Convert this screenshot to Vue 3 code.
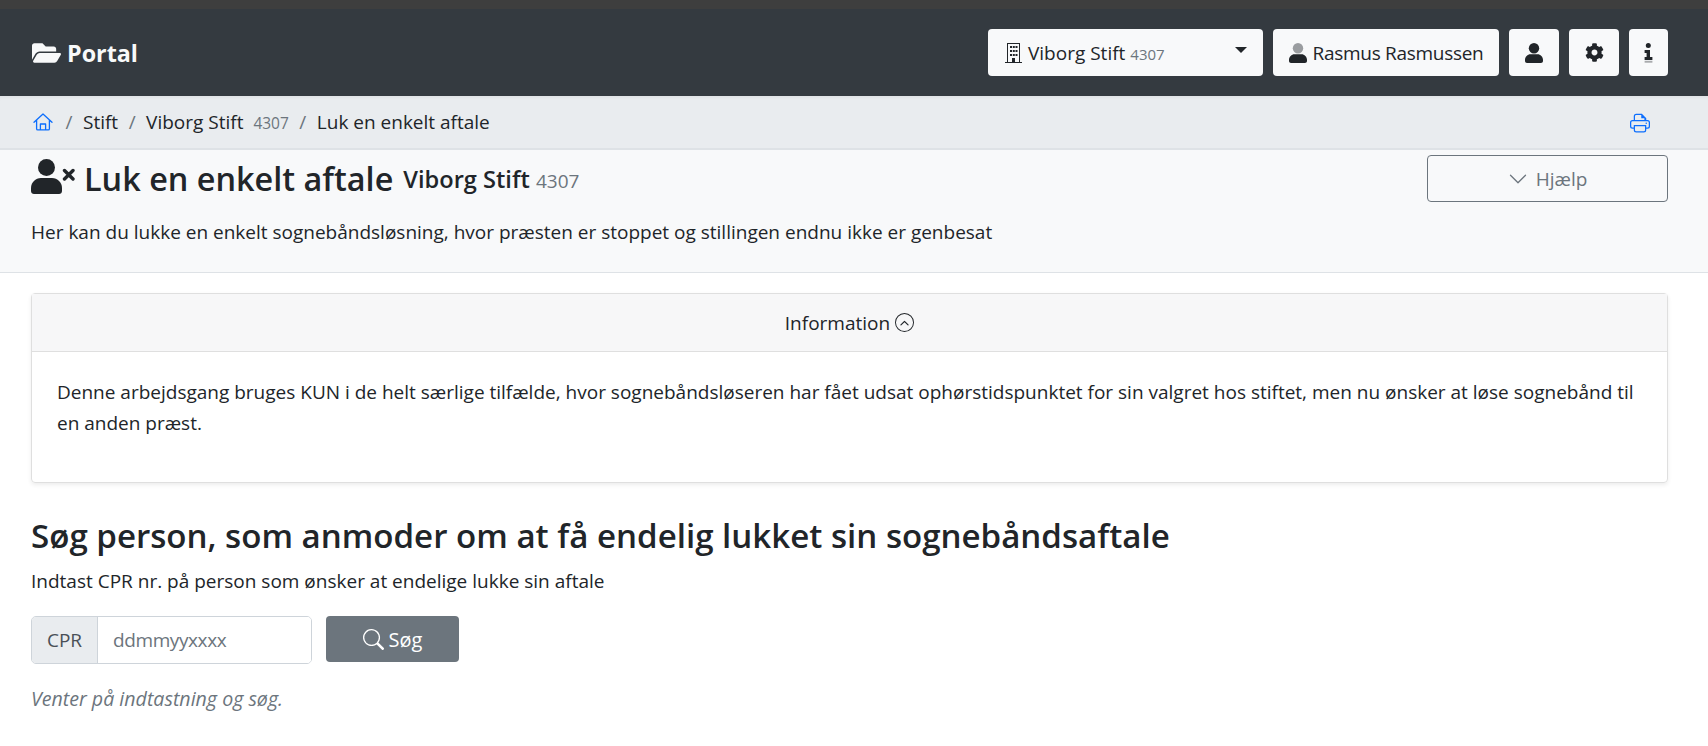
<script setup>
const crumbs = ['Stift']
</script>

<template>
  <div class="page">
    <div class="topstrip"></div>
    <nav class="navbar">
      <a class="brand">
        <svg class="folder" viewBox="0 0 576 512"><path fill="currentColor" d="M572.7 292.1 500.3 416.2A64 64 0 0 1 445 448H45c-18.500 0-30.100-20.100-20.700-36.100l72.400-124.200A64 64 0 0 1 152 256h400c18.500 0 30.100 20.100 20.700 36.100zM152 224h328v-48c0-26.500-21.500-48-48-48H272l-64-64H48C21.500 64 0 85.500 0 112v278l69.100-118.400C86.200 242.300 117.800 224 152 224z"/></svg>
        <span>Portal</span>
      </a>
      <div class="nav-actions">
        <button class="nbtn select">
          <span class="select-label">
            <svg class="ico-building" viewBox="0 0 17 20"><path fill="currentColor" d="M2 0h13v19h2v1H0v-1h2V0zm1 1v18h4v-4h3v4h4V1H3z"/><path fill="currentColor" d="M5 3h2v2H5zm2.800 0h2v2h-2zm2.700 0h2v2h-2zM5 7h2v2H5zm2.800 0h2v2h-2zm2.700 0h2v2h-2zM5 11h2v2H5zm2.800 0h2v2h-2zm2.700 0h2v2h-2z"/></svg>
            <span>Viborg Stift</span><small class="code">4307</small>
          </span>
          <span class="caret"></span>
        </button>
        <button class="nbtn user">
          <svg class="ico-user" viewBox="0 0 18 20"><ellipse cx="9" cy="5.200" rx="5.200" ry="5.200" fill="#9a9da0"/><path fill="currentColor" d="M5.500 11.200h7c3 0 5.500 2.500 5.500 5.500v1.300c0 1.100-.9 2-2 2H2c-1.100 0-2-.9-2-2v-1.300c0-3 2.500-5.500 5.500-5.500z"/></svg>
          <span class="username">Rasmus Rasmussen</span>
        </button>
        <button class="nbtn square">
          <svg class="ico-user2" viewBox="0 0 18 20"><ellipse cx="9" cy="5.200" rx="5.200" ry="5.200" fill="currentColor"/><path fill="currentColor" d="M5.500 11.200h7c3 0 5.500 2.500 5.500 5.500v1.300c0 1.100-.9 2-2 2H2c-1.100 0-2-.9-2-2v-1.300c0-3 2.500-5.500 5.500-5.500z"/></svg>
        </button>
        <button class="nbtn square">
          <svg class="ico-gear" viewBox="0 0 512 512"><path fill="currentColor" d="M487.400 315.700l-42.600-24.600c4.300-23.200 4.300-47 0-70.200l42.600-24.600c4.900-2.800 7.100-8.600 5.500-14-11.100-35.600-30-67.800-54.700-94.600-3.800-4.100-10-5.100-14.800-2.300L380.800 110c-17.900-15.400-38.500-27.300-60.800-35.100V25.800c0-5.600-3.900-10.500-9.400-11.700-36.700-8.200-74.300-7.800-109.200 0-5.500 1.200-9.400 6.100-9.400 11.700V75c-22.200 7.900-42.800 19.800-60.800 35.100L88.700 85.500c-4.900-2.800-11-1.900-14.800 2.300-24.700 26.700-43.600 58.900-54.700 94.600-1.700 5.400.6 11.200 5.500 14L67.300 221c-4.300 23.200-4.300 47 0 70.200l-42.600 24.600c-4.900 2.800-7.100 8.600-5.500 14 11.100 35.600 30 67.800 54.700 94.600 3.800 4.100 10 5.100 14.800 2.300l42.600-24.600c17.900 15.400 38.500 27.300 60.800 35.100v49.200c0 5.600 3.900 10.500 9.400 11.700 36.700 8.200 74.300 7.800 109.200 0 5.500-1.200 9.400-6.100 9.400-11.700v-49.200c22.200-7.900 42.800-19.800 60.800-35.100l42.600 24.600c4.900 2.800 11 1.900 14.800-2.300 24.700-26.700 43.600-58.900 54.700-94.600 1.500-5.500-.7-11.300-5.600-14.100zM256 336c-44.100 0-80-35.900-80-80s35.900-80 80-80 80 35.900 80 80-35.900 80-80 80z"/></svg>
        </button>
        <button class="nbtn info">
          <svg class="ico-info" viewBox="0 0 9 20"><circle cx="4.300" cy="2.600" r="2.500" fill="currentColor"/><path fill="currentColor" d="M.6 7h5.400v7h2.400v3H.6v-3h2V10H.6z"/><rect x=".6" y="17.800" width="7.800" height="1.900" fill="#a9abad"/></svg>
        </button>
      </div>
    </nav>

    <div class="crumbbar">
      <ol class="crumbs">
        <li>
          <svg class="ico-home" viewBox="0 0 20 18"><path fill="none" stroke="currentColor" stroke-width="1.300" stroke-linecap="round" stroke-linejoin="round" d="M1 9.300 10 1l9 8.300M3.600 7.200V15.700c0 .7.500 1.200 1.200 1.200h10.400c.7 0 1.200-.5 1.200-1.200V7.200M7.400 16.900V11h5.200v5.900"/></svg>
        </li>
        <li v-for="c in crumbs" :key="c" class="sep">{{ c }}</li>
        <li class="sep">Viborg Stift <small class="crumbcode">4307</small></li>
        <li class="sep">Luk en enkelt aftale</li>
      </ol>
      <svg class="ico-print" viewBox="0 0 16 16"><path fill="currentColor" d="M5 1a2 2 0 0 0-2 2v3H2a2 2 0 0 0-2 2v3a2 2 0 0 0 2 2h1v1a2 2 0 0 0 2 2h6a2 2 0 0 0 2-2v-1h1a2 2 0 0 0 2-2V8a2 2 0 0 0-2-2h-1V4.500L9.500 1H5zm0 1h4v2.500h2.500V6H4V3a1 1 0 0 1 1-1zM2 7h12a1 1 0 0 1 1 1v3a1 1 0 0 1-1 1h-1v-2H3v2H2a1 1 0 0 1-1-1V8a1 1 0 0 1 1-1zm2 4h8v3a1 1 0 0 1-1 1H5a1 1 0 0 1-1-1v-3z"/><circle cx="13" cy="8.500" r=".6" fill="currentColor"/></svg>
    </div>

    <header class="pagehead">
      <div class="headrow">
        <h1>
          <svg class="ico-userx" viewBox="0 0 44 35"><circle cx="15.500" cy="8.500" r="8.500" fill="currentColor"/><path fill="currentColor" d="M10 19h11c5.500 0 10 4.500 10 10v3c0 1.700-1.300 3-3 3H3c-1.700 0-3-1.300-3-3v-3c0-5.500 4.500-10 10-10z"/><path stroke="currentColor" stroke-width="3.400" stroke-linecap="round" d="M33.500 11.500l8.500 8.500M42 11.500l-8.500 8.500"/></svg>
          <span>Luk en enkelt aftale</span>
          <small class="h1sub">Viborg Stift <small class="h1code">4307</small></small>
        </h1>
        <button class="help">
          <svg class="ico-chev" viewBox="0 0 16 16"><path fill="currentColor" fill-rule="evenodd" d="M1.646 4.646a.5.5 0 0 1 .708 0L8 10.293l5.646-5.647a.5.5 0 0 1 .708.708l-6 6a.5.5 0 0 1-.708 0l-6-6a.5.5 0 0 1 0-.708z"/></svg>
          Hjælp
        </button>
      </div>
      <p class="lead">Her kan du lukke en enkelt sognebåndsløsning, hvor præsten er stoppet og stillingen endnu ikke er genbesat</p>
    </header>

    <main class="content">
      <section class="card">
        <div class="card-header">
          Information
          <svg class="ico-up" viewBox="0 0 16 16"><path fill="currentColor" d="M.8 8a7.200 7.200 0 1 0 14.400 0A7.200 7.200 0 0 0 .8 8zM16 8A8 8 0 1 1 0 8a8 8 0 0 1 16 0z"/><path fill="currentColor" d="M4.646 10.354a.5.5 0 0 0 .708 0L8 7.707l2.646 2.647a.5.5 0 0 0 .708-.708l-3-3a.5.5 0 0 0-.708 0l-3 3a.5.5 0 0 0 0 .708z"/></svg>
        </div>
        <div class="card-body">Denne arbejdsgang bruges KUN i de helt særlige tilfælde, hvor sognebåndsløseren har fået udsat ophørstidspunktet for sin valgret hos stiftet, men nu ønsker at løse sognebånd til en anden præst.</div>
      </section>

      <h2>Søg person, som anmoder om at få endelig lukket sin sognebåndsaftale</h2>
      <p class="hint">Indtast CPR nr. på person som ønsker at endelige lukke sin aftale</p>

      <div class="searchrow">
        <div class="inputgroup">
          <span class="addon">CPR</span>
          <input class="cpr" placeholder="ddmmyyxxxx" />
        </div>
        <button class="search">
          <svg class="ico-search" viewBox="0 0 16 16"><path fill="currentColor" d="M11.742 10.344a6.500 6.500 0 1 0-1.397 1.398h-.001c.03.04.062.078.098.115l3.850 3.850a1 1 0 0 0 1.415-1.414l-3.850-3.850a1.007 1.007 0 0 0-.115-.100zM12 6.500a5.500 5.500 0 1 1-11 0 5.500 5.500 0 0 1 11 0z"/></svg>
          Søg
        </button>
      </div>
      <p class="waiting">Venter på indtastning og søg.</p>
    </main>
  </div>
</template>

<style>
html, body { margin: 0; background: #fff; }
</style>

<style scoped>
.page {
  font-family: "Open Sans", "Noto Sans", sans-serif;
  font-size: 19px;
  color: #212529;
  min-height: 746px;
  background: #fff;
}
.topstrip { height: 9px; background: #3e3e3e; }
.navbar {
  height: 87px;
  box-sizing: border-box;
  background: #343a40;
  display: flex;
  align-items: center;
  justify-content: space-between;
  padding: 0 40px 0 32px;
}
.brand { display: flex; align-items: center; gap: 6px; color: #f8f9fa; font-size: 23.300px; font-weight: 700; }
.folder { width: 29px; height: 26px; }
.nav-actions { display: flex; gap: 10px; align-items: stretch; height: 47px; }
.nbtn {
  border: 0;
  background: #f8f9fa;
  border-radius: 4px;
  color: #212529;
  font: inherit;
  display: flex;
  align-items: center;
  padding: 0;
}
.select { width: 275px; justify-content: space-between; padding: 0 12px 0 17px; }
.select-label { display: flex; align-items: center; }
.ico-building { width: 17px; height: 20px; margin-right: 6px; }
.code { font-size: 15px; color: #6c757d; margin-left: 5px; margin-top: 2px; }
.caret { width: 0; height: 0; border-left: 6px solid transparent; border-right: 6px solid transparent; border-top: 6px solid #212529; margin-top: -6px; margin-right: 4px; }
.user { width: 226px; justify-content: center; gap: 6px; }
.username { letter-spacing: -.3px; }
.ico-user { width: 18px; height: 20px; }
.square { width: 50px; justify-content: center; }
.info { width: 39px; justify-content: center; }
.ico-user2 { width: 18px; height: 20px; }
.ico-gear { width: 19px; height: 19px; }
.ico-info { width: 9px; height: 20px; }

.crumbbar {
  height: 54px;
  background: #e9ecef;
  border-bottom: 2px solid #dee2e6;
  box-sizing: border-box;
  display: flex;
  align-items: center;
  justify-content: space-between;
  padding: 0 40px 0 33px;
  box-shadow: inset 0 4px 4px -3px rgba(0,0,0,.06);
}
.crumbs { list-style: none; display: flex; align-items: center; margin: 0; padding: 0; }
.crumbs li.sep::before { content: "/"; color: #6c757d; padding: 0 10.500px; }
.ico-home { width: 20px; height: 18px; color: #0d6efd; display: block; margin-right: 2px; margin-top: -1px; }
.crumbcode { font-size: 15.500px; color: #6c757d; margin-left: 5px; }
.ico-print { width: 20px; height: 21px; color: #0d6efd; margin-right: 18px; }

.pagehead { background: #f8f9fa; border-bottom: 1px solid #dee2e6; height: 123px; box-sizing: border-box; padding: 5px 40px 0 31px; }
.headrow { display: flex; justify-content: space-between; align-items: flex-start; }
h1 { margin: 0; display: flex; align-items: center; font-size: 32.400px; font-weight: 600; line-height: 47px; height: 47px; }
.ico-userx { width: 44px; height: 35px; margin-right: 9px; margin-top: -4px; }
.h1sub { font-size: 23.600px; font-weight: 600; margin-left: 10px; margin-top: 3px; }
.h1code { font-size: 19px; font-weight: 400; color: #6c757d; }
.help { width: 241px; height: 47px; border: 1px solid #6c757d; border-radius: 4px; background: transparent; color: #6c757d; font: inherit; display: flex; justify-content: center; align-items: center; gap: 8px; }
.ico-chev { width: 20px; height: 20px; }
.lead { margin: 15px 0 0; line-height: 30px; }

.content { padding: 20px 40px 0 31px; }
.card { border: 1px solid #dfdfdf; border-radius: 4px; box-shadow: 0 2px 4px rgba(0,0,0,.075); }
.card-header { height: 58px; box-sizing: border-box; background: #f7f7f8; border-bottom: 1px solid #dfdfdf; display: flex; justify-content: center; align-items: center; gap: 5px; }
.ico-up { width: 19px; height: 19px; }
.card-body { padding: 25px 24px 36px 25px; height: 130px; box-sizing: border-box; line-height: 31px; }
h2 { margin: 30px 0 0; font-size: 33.100px; font-weight: 600; line-height: 46px; }
.hint { margin: 9px 0 0; line-height: 26px; }
.searchrow { display: flex; gap: 14px; margin-top: 22px; }
.inputgroup { width: 281px; height: 48px; box-sizing: border-box; border: 1px solid #ced4da; border-radius: 5px; display: flex; overflow: hidden; }
.addon { width: 65px; background: #e9ecef; border-right: 1px solid #ced4da; display: flex; align-items: center; justify-content: center; color: #495057; }
.cpr { flex: 1; min-width: 0; border: 0; outline: 0; padding: 0 15px; font: inherit; letter-spacing: -.4px; }
.cpr::placeholder { color: #6c757d; }
.search { width: 133px; height: 46px; border: 0; border-radius: 4px; background: #6c757d; color: #fff; font: inherit; font-size: 20px; display: flex; align-items: center; justify-content: center; gap: 5px; }
.ico-search { width: 21px; height: 21px; }
.waiting { margin: 21px 0 0; font-size: 19.600px; font-style: italic; color: #6c757d; }
</style>
